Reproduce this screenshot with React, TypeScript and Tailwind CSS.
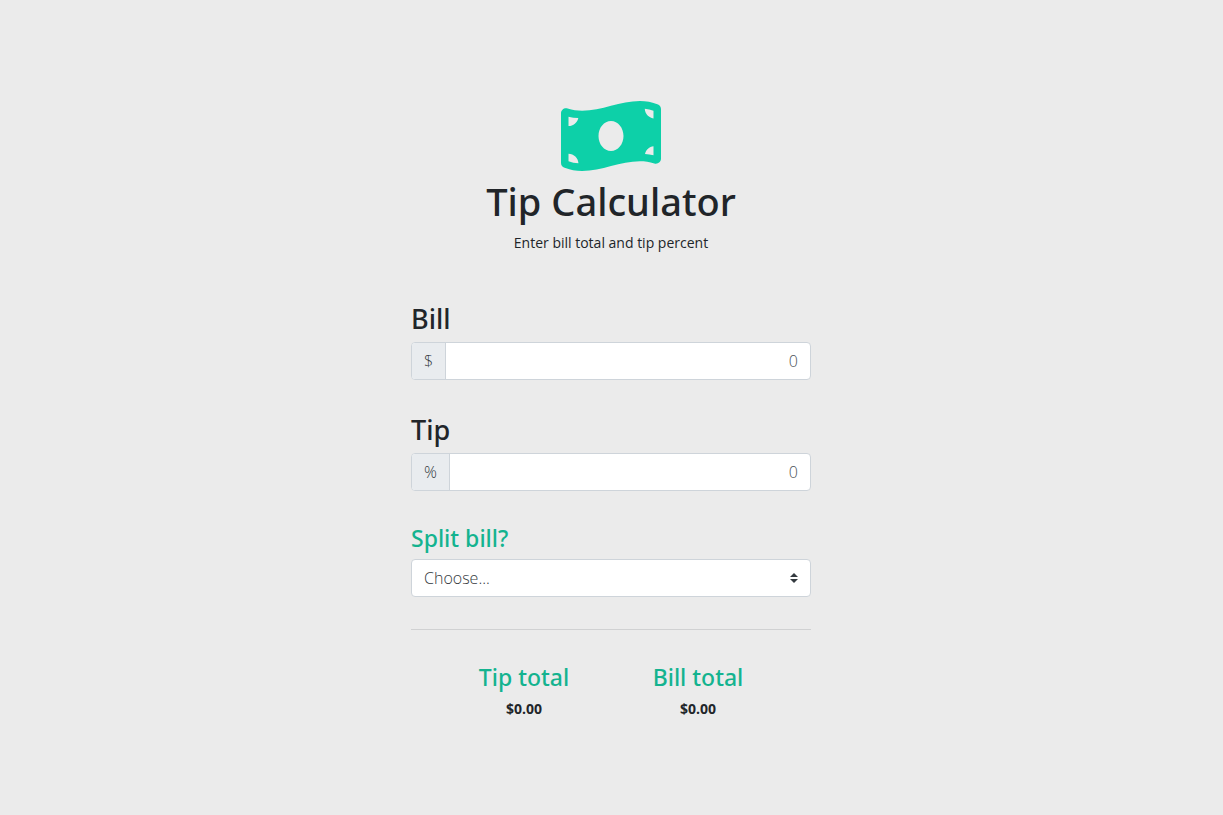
import { useState } from "react";
import { FaMoneyBillWave } from "react-icons/fa";

type AmountFieldProps = {
  id: string;
  label: string;
  unit: string;
  value: string;
  onChange: (value: string) => void;
};

function AmountField({ id, label, unit, value, onChange }: AmountFieldProps) {
  return (
    <div className="mb-[33px]">
      <label
        htmlFor={id}
        className="mb-[7px] block font-['Noto_Sans',sans-serif] text-[27px] leading-[33px] font-medium text-[#212529]"
      >
        {label}
      </label>
      <div className="flex h-[38px] overflow-hidden rounded border border-[#ced4da] bg-white font-light">
        <span className="flex items-center border-r border-[#ced4da] bg-[#e9ecef] px-3 text-base text-[#343a40]">
          {unit}
        </span>
        <input
          id={id}
          type="text"
          inputMode="decimal"
          placeholder="0"
          value={value}
          onChange={(event) => onChange(event.target.value)}
          className="min-w-0 flex-1 px-3 text-right text-base text-[#343a40] outline-none placeholder:text-[#495057]"
        />
      </div>
    </div>
  );
}

function Total({ label, amount }: { label: string; amount: number }) {
  return (
    <div className="flex-1 text-center">
      <h2 className="font-['Noto_Sans',sans-serif] text-[23px] leading-7 font-medium text-[#14b38f]">{label}</h2>
      <p className="mt-2 text-sm leading-5 font-bold text-[#212529]">${amount.toFixed(2)}</p>
    </div>
  );
}

export default function App() {
  const [bill, setBill] = useState("");
  const [tip, setTip] = useState("");
  const [people, setPeople] = useState("");

  const share = Number(people) || 1;
  const billAmount = Number(bill) || 0;
  const tipAmount = (billAmount * (Number(tip) || 0)) / 100;

  return (
    <main className="min-h-screen bg-[#ebebeb] pt-24 pr-[17px] pb-20 pl-4 font-['Open_Sans','Noto_Sans',sans-serif]">
      <div className="mx-auto w-full max-w-[400px]">
        <header className="mb-[47px] flex flex-col items-center text-center">
          <FaMoneyBillWave className="h-20 w-[100px] text-[#0dd0a8]" aria-hidden="true" />
          <h1 className="mt-[3px] font-['Noto_Sans',sans-serif] text-[38px] leading-[45px] font-medium text-[#212529]">
            Tip Calculator
          </h1>
          <p className="mt-[7px] text-sm leading-6 text-[#212529]">Enter bill total and tip percent</p>
        </header>

        <form onSubmit={(event) => event.preventDefault()}>
          <AmountField id="bill" label="Bill" unit="$" value={bill} onChange={setBill} />
          <AmountField id="tip" label="Tip" unit="%" value={tip} onChange={setTip} />

          <label
            htmlFor="people"
            className="mb-[7px] block font-['Noto_Sans',sans-serif] text-[23px] leading-7 font-medium text-[#14b38f]"
          >
            Split bill?
          </label>
          <div className="relative">
            <select
              id="people"
              value={people}
              onChange={(event) => setPeople(event.target.value)}
              className="h-[38px] w-full appearance-none rounded border border-[#ced4da] bg-white px-3 text-base font-light text-[#343a40] outline-none"
            >
              <option value="">Choose...</option>
              <option value="2">2 people</option>
              <option value="3">3 people</option>
              <option value="4">4 people</option>
            </select>
            <svg
              viewBox="0 0 4 5"
              className="pointer-events-none absolute top-1/2 right-[13px] h-2.5 w-2 -translate-y-1/2 fill-[#343a40]"
              aria-hidden="true"
            >
              <path d="M2 0L0 2h4zm0 5L0 3h4z" />
            </svg>
          </div>
        </form>

        <hr className="mt-8 mb-[33px] border-[#d0d1d2]" />

        <section className="flex px-[26px]" aria-label="Totals">
          <Total label="Tip total" amount={tipAmount / share} />
          <Total label="Bill total" amount={(billAmount + tipAmount) / share} />
        </section>
      </div>
    </main>
  );
}
